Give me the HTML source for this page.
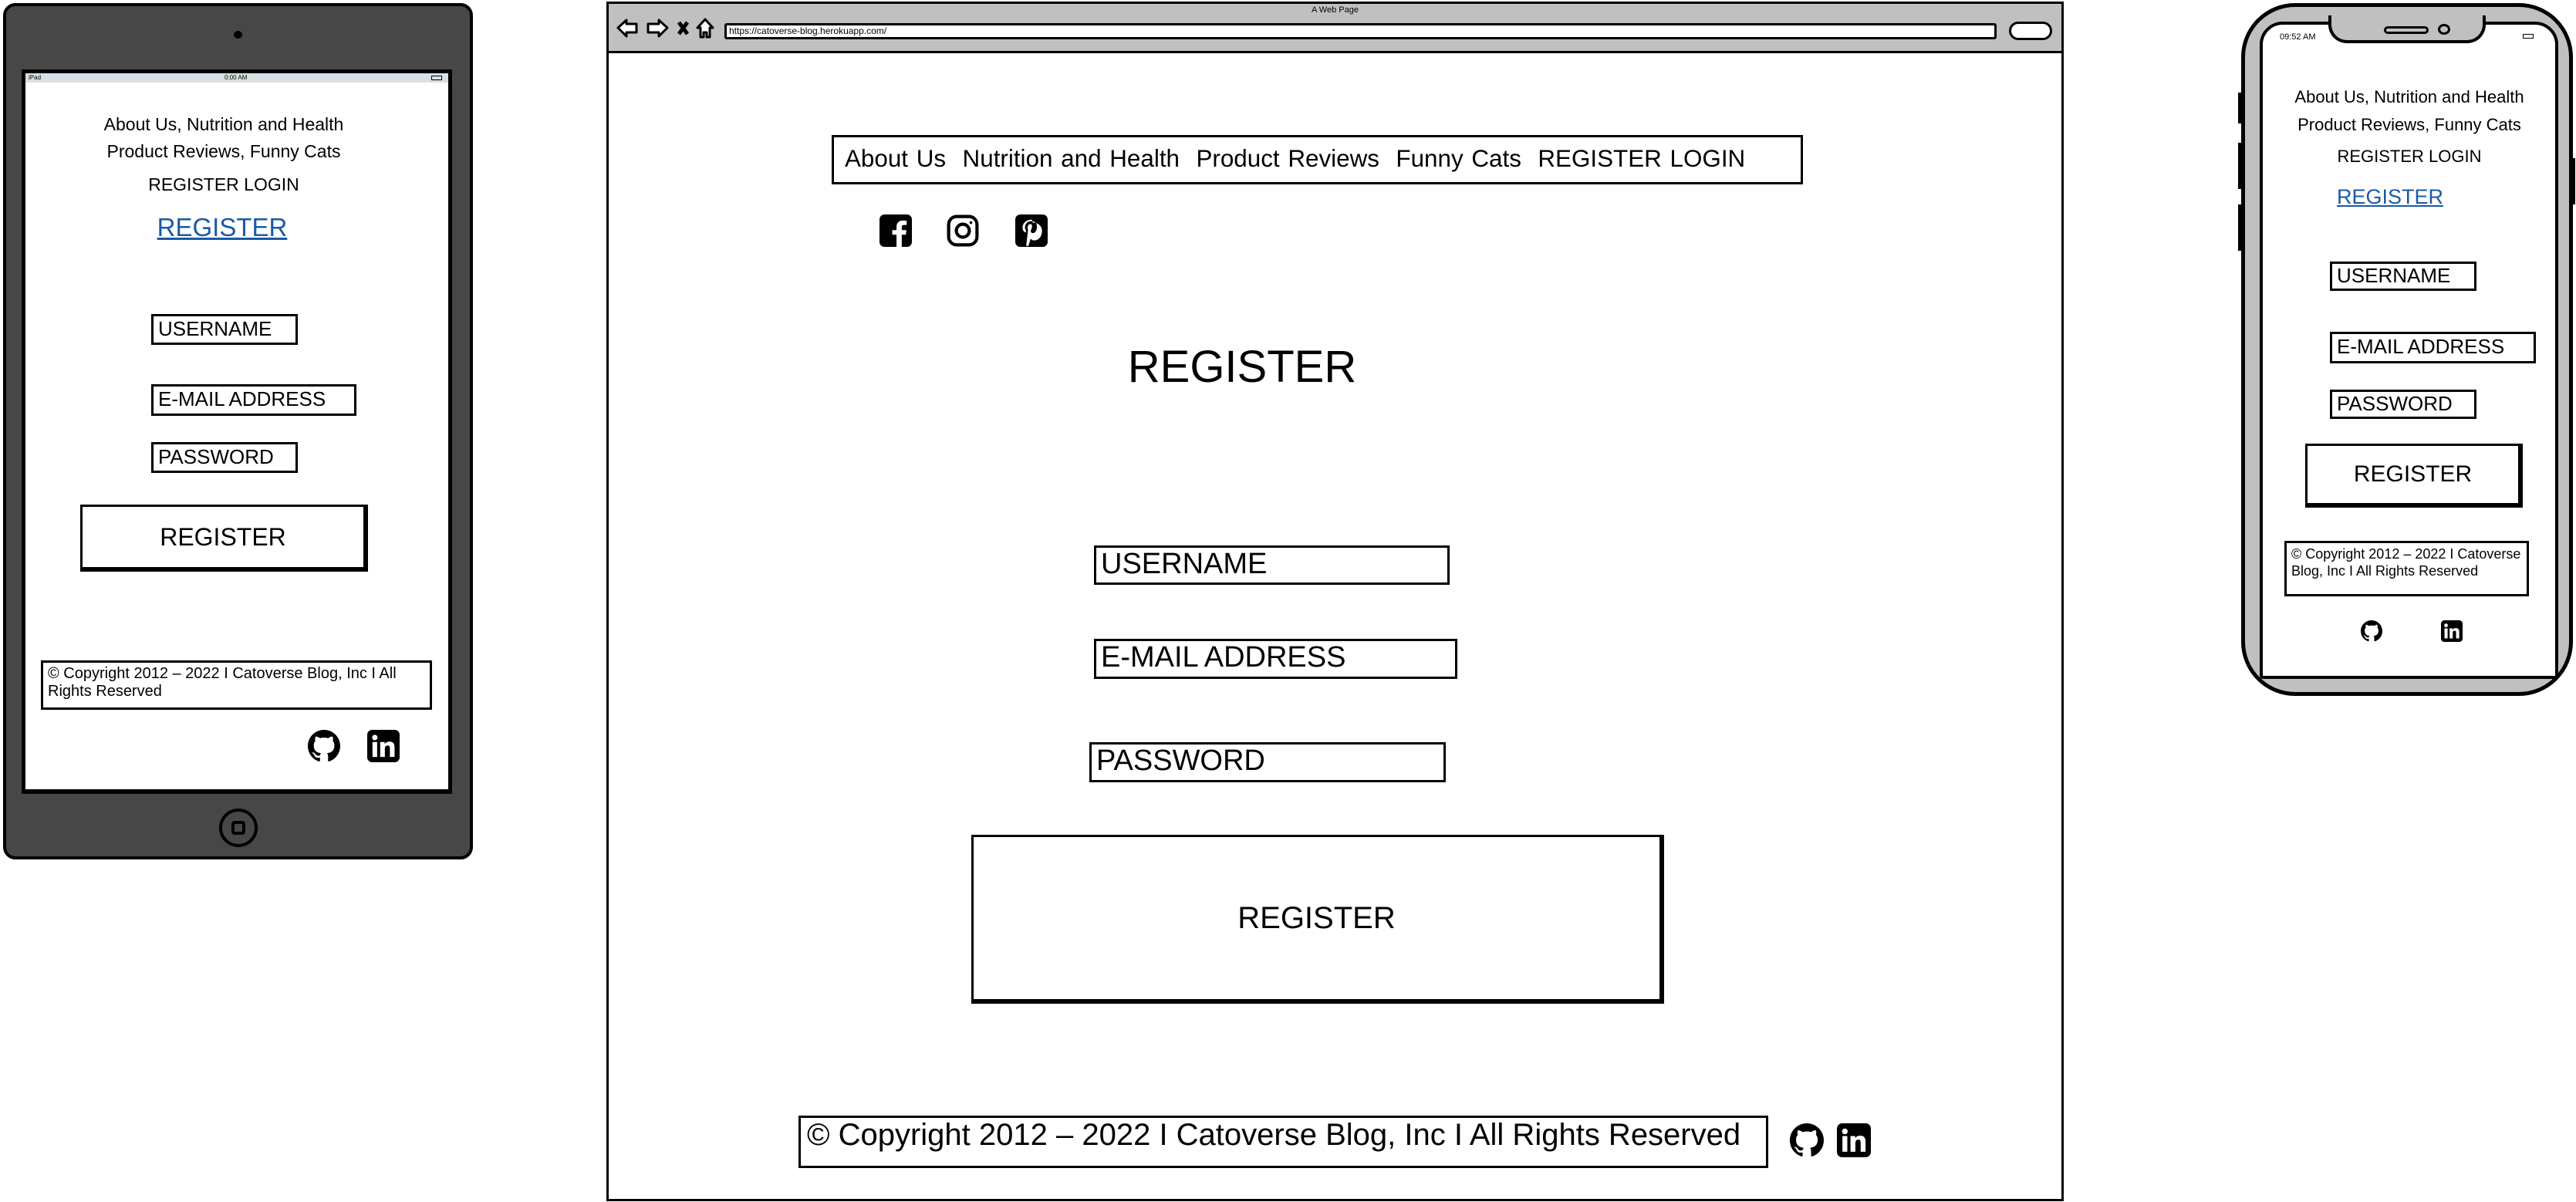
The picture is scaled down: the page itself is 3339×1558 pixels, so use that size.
<!DOCTYPE html>
<html><head><meta charset="utf-8">
<style>
*{margin:0;padding:0;box-sizing:border-box}
body{width:3339px;height:1558px;position:relative;background:#fff;font-family:"Liberation Sans",sans-serif;color:#000;overflow:hidden}
.a{position:absolute}
.box{position:absolute;border:3px solid #000;background:#fff;white-space:nowrap}
.c{text-align:center;white-space:nowrap}
.btn{position:absolute;border:3px solid #000;border-right-width:6px;border-bottom-width:6px;background:#fff;display:flex;align-items:center;justify-content:center}
a{color:#1a5aa6}
</style></head><body>

<!-- ===== iPad ===== -->
<div class="a" style="left:4px;top:4px;width:609px;height:1110px;background:#474747;border:4px solid #000;border-radius:16px"></div>
<div class="a" style="left:303px;top:40px;width:11px;height:10px;background:#000;border-radius:50%"></div>
<div class="a" style="left:28px;top:90px;width:558px;height:939px;background:#000"></div>
<div class="a" style="left:33px;top:95px;width:548px;height:928px;background:#fff"></div>
<div class="a" style="left:33px;top:95px;width:548px;height:12px;background:#d9dfe2;font-size:8px;line-height:12px">
 <span class="a" style="left:4px">iPad</span><span class="a" style="left:258px">0:00 AM</span>
 <span class="a" style="right:8px;top:3px;width:14px;height:6px;border:1px solid #000"></span></div>
<div class="a c" style="left:33px;top:144px;width:514px;font-size:23px;line-height:35px">About Us, Nutrition and Health<br>Product Reviews, Funny Cats</div>
<div class="a c" style="left:33px;top:226px;width:514px;font-size:23px">REGISTER LOGIN</div>
<div class="a c" style="left:33px;top:276px;width:510px;font-size:33px"><a style="text-decoration:underline">REGISTER</a></div>
<div class="box" style="left:196px;top:407px;width:190px;height:40px;font-size:26px;line-height:32px;padding-left:6px">USERNAME</div>
<div class="box" style="left:196px;top:498px;width:266px;height:41px;font-size:26px;line-height:33px;padding-left:6px">E-MAIL ADDRESS</div>
<div class="box" style="left:196px;top:573px;width:190px;height:40px;font-size:26px;line-height:32px;padding-left:6px">PASSWORD</div>
<div class="btn" style="left:104px;top:654px;width:373px;height:87px;font-size:32px">REGISTER</div>
<div class="box" style="left:53px;top:856px;width:507px;height:64px;font-size:20px;line-height:23px;padding:3px 6px">© Copyright 2012 – 2022 I Catoverse Blog, Inc I All<br>Rights Reserved</div>
<svg class="a" style="left:399px;top:946px" width="42" height="42" viewBox="0 0 16 16"><path d="M8 0C3.58 0 0 3.58 0 8c0 3.54 2.29 6.53 5.47 7.59.4.07.55-.17.55-.38 0-.19-.01-.82-.01-1.49-2.01.37-2.530-.49-2.69-.94-.09-.23-.48-.94-.82-1.130-.28-.15-.68-.52-.01-.53.63-.01 1.08.58 1.23.82.72 1.21 1.87.87 2.33.66.07-.52.28-.87.51-1.07-1.78-.2-3.64-.89-3.64-3.95 0-.87.31-1.59.82-2.15-.08-.2-.36-1.02.08-2.12 0 0 .67-.21 2.2.82.64-.18 1.32-.27 2-.27.68 0 1.36.09 2 .27 1.53-1.04 2.2-.82 2.2-.82.44 1.1.16 1.92.08 2.12.51.56.82 1.27.82 2.15 0 3.07-1.87 3.75-3.65 3.95.29.25.54.73.54 1.48 0 1.07-.01 1.93-.01 2.2 0 .21.15.46.55.38A8.01 8.01 0 0016 8c0-4.42-3.58-8-8-8z"/></svg>
<svg class="a" style="left:476px;top:946px" width="42" height="42" viewBox="0 0 16 16"><rect width="16" height="16" rx="2.5"/><rect x="2.6" y="6" width="2.3" height="7.4" fill="#fff"/><circle cx="3.75" cy="3.8" r="1.35" fill="#fff"/><path d="M6.4 6h2.2v1c.4-.7 1.3-1.2 2.4-1.2 2 0 2.5 1.3 2.5 3v4.6h-2.3V9.3c0-.9-.2-1.6-1.1-1.6-.9 0-1.4.6-1.4 1.7v4H6.4z" fill="#fff"/></svg>
<div class="a" style="left:284px;top:1048px;width:50px;height:50px;border:4px solid #000;border-radius:50%"></div>
<div class="a" style="left:300px;top:1064px;width:18px;height:18px;border:4px solid #000;border-radius:4px"></div>

<!-- ===== Browser ===== -->
<div class="a" style="left:786px;top:2px;width:1889px;height:1555px;border:3px solid #000;background:#fff"></div>
<div class="a" style="left:786px;top:2px;width:1889px;height:67px;border:3px solid #000;background:#c0c0c0"></div>
<div class="a c" style="left:786px;top:7px;width:1889px;font-size:11px">A Web Page</div>
<svg class="a" style="left:798px;top:22px" width="132" height="30" viewBox="0 0 132 30" fill="#fff" stroke="#000" stroke-width="3" stroke-linejoin="round">
 <path d="M3 14 L14 4 V9 H27 V20 H14 V25 Z"/>
 <path d="M67 14 L56 4 V9 H42 V20 H56 V25 Z"/>
 <path d="M82 7 L93 22 M93 7 L82 22" stroke-width="5"/>
 <path d="M106 14 L116 3 L126 14 H122 V26 H118 V20 H114 V26 H110 V14 Z"/>
</svg>
<div class="a" style="left:939px;top:30px;width:1649px;height:21px;border:3px solid #000;border-radius:3px;background:#fff;font-size:12px;line-height:15px;padding-left:3px">https://catoverse-blog.herokuapp.com/</div>
<div class="a" style="left:2604px;top:28px;width:56px;height:24px;border:3px solid #000;border-radius:12px;background:#fff"></div>

<div class="box" style="left:1078px;top:175px;width:1259px;height:64px;font-size:31.4px;line-height:56px;padding-left:14px;word-spacing:2px">About Us&nbsp; Nutrition and Health&nbsp; Product Reviews&nbsp; Funny Cats&nbsp; REGISTER LOGIN</div>
<svg class="a" style="left:1140px;top:278px" width="42" height="42" viewBox="0 0 16 16"><rect width="16" height="16" rx="2.5"/><path d="M11 16V10h2l.3-2.3H11V6.3c0-.7.2-1.1 1.1-1.1h1.3V3.1c-.2 0-1-.1-1.9-.1-1.9 0-3.1 1.1-3.1 3.2V7.7H6.3V10H8.4v6z" fill="#fff"/></svg>
<svg class="a" style="left:1227px;top:278px" width="42" height="42" viewBox="0 0 16 16" fill="none" stroke="#000"><rect x="1" y="1" width="14" height="14" rx="4" stroke-width="1.6"/><circle cx="8" cy="8" r="3.2" stroke-width="1.6"/><circle cx="12" cy="4" r=".7" fill="#000" stroke="none"/></svg>
<svg class="a" style="left:1316px;top:278px" width="42" height="42" viewBox="0 0 16 16"><rect width="16" height="16" rx="2.5"/><path d="M8.2 2.5c-3 0-4.6 2.1-4.6 3.9 0 1.1.4 2 1.3 2.4.1.1.3 0 .3-.2l.1-.5c0-.2 0-.2-.1-.4-.3-.3-.4-.7-.4-1.3 0-1.7 1.2-3.1 3.2-3.1 1.7 0 2.7 1.1 2.7 2.5 0 1.9-.8 3.4-2 3.4-.7 0-1.2-.6-1-1.2.2-.8.6-1.7.6-2.3 0-.5-.3-1-.9-1-.7 0-1.3.8-1.3 1.8 0 .6.2 1.1.2 1.1L5.4 15.5h1.1l1.1-3.6c.3.5 1 .9 1.8.9 2.3 0 3.8-2.1 3.8-4.8 0-2.1-1.8-4-4.6-4z" fill="#fff"/></svg>

<div class="a c" style="left:1310px;top:442px;width:600px;font-size:58px">REGISTER</div>
<div class="box" style="left:1418px;top:707px;width:461px;height:51px;font-size:38px;line-height:42px;padding-left:6px">USERNAME</div>
<div class="box" style="left:1418px;top:828px;width:471px;height:52px;font-size:38px;line-height:42px;padding-left:6px">E-MAIL ADDRESS</div>
<div class="box" style="left:1412px;top:962px;width:462px;height:52px;font-size:38px;line-height:42px;padding-left:6px">PASSWORD</div>
<div class="btn" style="left:1259px;top:1082px;width:898px;height:219px;font-size:40px">REGISTER</div>
<div class="box" style="left:1035px;top:1446px;width:1257px;height:68px;font-size:40px;line-height:44px;padding-left:8px">© Copyright 2012 – 2022 I Catoverse Blog, Inc I All Rights Reserved</div>
<svg class="a" style="left:2320px;top:1456px" width="44" height="44" viewBox="0 0 16 16"><path d="M8 0C3.58 0 0 3.58 0 8c0 3.54 2.29 6.53 5.47 7.59.4.07.55-.17.55-.38 0-.19-.01-.82-.01-1.49-2.01.37-2.53-.49-2.69-.94-.09-.23-.48-.94-.82-1.13-.28-.15-.68-.52-.01-.53.63-.01 1.08.58 1.23.82.72 1.21 1.87.87 2.33.66.07-.52.28-.87.51-1.07-1.78-.2-3.64-.89-3.64-3.95 0-.87.31-1.59.82-2.15-.08-.2-.36-1.02.08-2.12 0 0 .67-.21 2.2.82.64-.18 1.32-.27 2-.27.68 0 1.36.09 2 .27 1.53-1.04 2.2-.82 2.2-.82.44 1.1.16 1.92.08 2.12.51.56.82 1.27.82 2.15 0 3.07-1.87 3.75-3.65 3.95.29.25.54.73.54 1.48 0 1.07-.01 1.93-.01 2.2 0 .21.15.46.55.38A8.01 8.01 0 0016 8c0-4.42-3.58-8-8-8z"/></svg>
<svg class="a" style="left:2381px;top:1456px" width="44" height="44" viewBox="0 0 16 16"><rect width="16" height="16" rx="2.5"/><rect x="2.6" y="6" width="2.3" height="7.4" fill="#fff"/><circle cx="3.75" cy="3.8" r="1.35" fill="#fff"/><path d="M6.4 6h2.2v1c.4-.7 1.3-1.2 2.4-1.2 2 0 2.5 1.3 2.5 3v4.6h-2.3V9.3c0-.9-.2-1.6-1.1-1.6-.9 0-1.4.6-1.4 1.7v4H6.4z" fill="#fff"/></svg>

<!-- ===== Phone ===== -->
<div class="a" style="left:2905px;top:4px;width:430px;height:898px;background:#c0c0c0;border:5px solid #000;border-radius:70px"></div>
<div class="a" style="left:2901px;top:120px;width:6px;height:40px;background:#000"></div>
<div class="a" style="left:2901px;top:185px;width:6px;height:60px;background:#000"></div>
<div class="a" style="left:2901px;top:265px;width:6px;height:60px;background:#000"></div>
<div class="a" style="left:3332px;top:205px;width:6px;height:60px;background:#000"></div>
<div class="a" style="left:2929px;top:28px;width:387px;height:852px;background:#fff;border:4px solid #000;border-radius:30px 30px 4px 4px"></div>
<div class="a" style="left:3018px;top:20px;width:204px;height:36px;background:#c0c0c0;border:4px solid #000;border-top:none;border-radius:0 0 24px 24px"></div>
<div class="a" style="left:3090px;top:34px;width:58px;height:10px;border:3px solid #000;border-radius:5px;background:#c0c0c0"></div>
<div class="a" style="left:3160px;top:31px;width:16px;height:14px;border:3px solid #000;border-radius:50%"></div>
<div class="a" style="left:2955px;top:42px;font-size:11px">09:52 AM</div>
<div class="a" style="left:3270px;top:44px;width:14px;height:6px;border:1px solid #000"></div>
<div class="a c" style="left:2933px;top:108px;width:380px;font-size:22px;line-height:36px">About Us, Nutrition and Health<br>Product Reviews, Funny Cats</div>
<div class="a c" style="left:2933px;top:190px;width:380px;font-size:22px">REGISTER LOGIN</div>
<div class="a" style="left:3029px;top:240px;font-size:27px"><a style="text-decoration:underline">REGISTER</a></div>
<div class="box" style="left:3020px;top:339px;width:190px;height:38px;font-size:26px;line-height:30px;padding-left:6px">USERNAME</div>
<div class="box" style="left:3020px;top:430px;width:267px;height:41px;font-size:26px;line-height:33px;padding-left:6px">E-MAIL ADDRESS</div>
<div class="box" style="left:3020px;top:505px;width:190px;height:38px;font-size:26px;line-height:30px;padding-left:6px">PASSWORD</div>
<div class="btn" style="left:2988px;top:575px;width:282px;height:83px;font-size:30px">REGISTER</div>
<div class="box" style="left:2961px;top:701px;width:317px;height:72px;font-size:18px;line-height:22px;padding:3px 6px">© Copyright 2012 – 2022 I Catoverse<br>Blog, Inc I All Rights Reserved</div>
<svg class="a" style="left:3060px;top:804px" width="28" height="28" viewBox="0 0 16 16"><path d="M8 0C3.58 0 0 3.58 0 8c0 3.54 2.29 6.53 5.47 7.59.4.07.55-.17.55-.38 0-.19-.01-.82-.01-1.49-2.01.37-2.53-.49-2.69-.94-.09-.23-.48-.94-.82-1.13-.28-.15-.68-.52-.01-.53.63-.01 1.08.58 1.23.82.72 1.21 1.87.87 2.33.66.07-.52.28-.87.51-1.07-1.78-.2-3.64-.89-3.64-3.95 0-.87.31-1.59.82-2.15-.08-.2-.36-1.02.08-2.12 0 0 .67-.21 2.2.82.64-.18 1.32-.27 2-.27.68 0 1.36.09 2 .27 1.53-1.04 2.2-.82 2.2-.82.44 1.1.16 1.92.08 2.12.51.56.82 1.27.82 2.15 0 3.07-1.87 3.75-3.65 3.95.29.25.54.73.54 1.48 0 1.07-.01 1.93-.01 2.2 0 .21.15.46.55.38A8.01 8.01 0 0016 8c0-4.42-3.58-8-8-8z"/></svg>
<svg class="a" style="left:3164px;top:804px" width="28" height="28" viewBox="0 0 16 16"><rect width="16" height="16" rx="2.5"/><rect x="2.6" y="6" width="2.3" height="7.4" fill="#fff"/><circle cx="3.75" cy="3.8" r="1.35" fill="#fff"/><path d="M6.4 6h2.2v1c.4-.7 1.3-1.2 2.4-1.2 2 0 2.5 1.3 2.5 3v4.6h-2.3V9.3c0-.9-.2-1.6-1.1-1.6-.9 0-1.4.6-1.4 1.7v4H6.4z" fill="#fff"/></svg>

</body></html>
